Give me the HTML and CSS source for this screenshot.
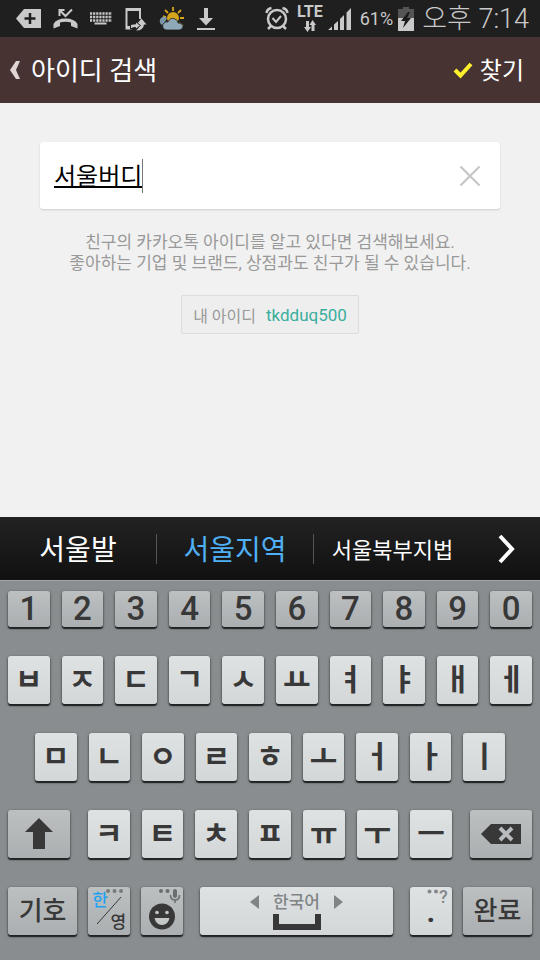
FILE: index.html
```html
<!DOCTYPE html>
<html lang="ko">
<head>
<meta charset="utf-8">
<meta name="viewport" content="width=device-width, initial-scale=1">
<title>아이디 검색</title>
<link rel="stylesheet" href="styles.css">
</head>
<body>
<div class="screen">
  <div class="status">
    <div class="status-icons">
      <svg width="25" height="20" viewBox="0 0 25 20"><path d="M8 0H25V19H8L0 9.500Z" fill="#c9c9c9"/><path d="M14 4V15M8.500 9.500H19.500" stroke="#1f1f1f" stroke-width="2.500"/></svg>
      <svg width="25" height="22" viewBox="0 0 24 22"><path d="M0 20.500V16Q3 10.500 12 10.500Q21 10.500 24 16V20.500L17.500 18V14.500Q12 13 6.500 14.500V18Z" fill="#c9c9c9"/><path d="M6 8V2H11M6 2L12 8L18.500 1.500" fill="none" stroke="#c9c9c9" stroke-width="2"/></svg>
      <svg width="22" height="13" viewBox="0 0 22 13"><path d="M0 1.500H22M0 5H22M0 8.500H22" stroke="#c9c9c9" stroke-width="2.400" stroke-dasharray="2.200 .9"/><path d="M4.500 11.500H16.500" stroke="#c9c9c9" stroke-width="2"/></svg>
      <svg width="23" height="24" viewBox="0 0 22 24"><path d="M1 1H16.500V12H14.500V4H3V19H7V22.500H1Z" fill="#c9c9c9"/><path d="M17 11.500L22 17.500H19.500Q19 23.500 11.500 23.500Q15 21 15 17.500H12Z" fill="#c9c9c9"/><path d="M6 18Q8 16.500 11 17V14.500L16 18.500L11 22.500V20.500Q9 20 6 22Z" fill="#c9c9c9" stroke="#1f1f1f" stroke-width="1"/></svg>
      <svg width="26" height="25" viewBox="0 0 26 25"><path d="M14 1V5M6 4L9 7M22 4L19 7M25 12H21M24 20L20 17M4 10L7 11" stroke="#d6a51c" stroke-width="1.800"/><circle cx="14" cy="12" r="6" fill="#d6a51c"/><path d="M3 19A4.500 4.500 0 0 1 2 12Q5 9 8 12L5 18Z" fill="#7b97a7"/><path d="M7 24A4 4 0 0 1 5 17Q7 15 9 16Q11 11 16 13Q19 14 19 17Q24 17 24 21Q23 24 20 24Z" fill="#90a9b8" stroke="#1f1f1f" stroke-width=".8"/></svg>
      <svg class="download" width="18" height="24" viewBox="0 0 18 24"><path d="M7 1H11V11H16L9 18.500L2 11H7ZM0 21H18V23H0Z" fill="#c9c9c9"/></svg>
    </div>
    <div class="status-info">
      <svg width="24" height="25" viewBox="0 0 24 25"><g fill="none" stroke="#c9c9c9"><circle cx="12" cy="13" r="9" stroke-width="2.500"/><path d="M7.500 12L11 16L16 10" stroke-width="2"/><path d="M1.500 7Q2 3 6.500 2M22.500 7Q22 3 17.500 2" stroke-width="2.500"/><path d="M6 20L3 23M18 20L21 23" stroke-width="2.500"/></g></svg>
      <div class="network"><span>LTE</span><svg width="12" height="12" viewBox="0 0 12 12"><path d="M2 1H5V7H7L3.500 12L0 7H2ZM7.500 11V5H5.500L8.500 0L12 5H10.500V11Z" fill="#c9c9c9"/></svg></div>
      <svg width="24" height="24" viewBox="0 0 24 24"><path d="M0 23L4 19.500V23ZM6 17.500L10 14V23H6ZM12 12L16 8V23H12ZM18.500 5.500L23 1V23H18.500Z" fill="#c9c9c9"/></svg>
      <span class="percent">61%</span>
      <svg width="16" height="24" viewBox="0 0 16 24"><path d="M5 0H11V2H16V11H0V2H5Z" fill="#555"/><path d="M0 11H16V24H0Z" fill="#c9c9c9"/><path d="M10 5L3 14H7L5 21L13 11H9L12 5Z" fill="#1b1b1b"/></svg>
      <span class="clock">오후 7:14</span>
    </div>
  </div>

  <header class="titlebar">
    <button class="back" type="button"><svg width="10" height="20" viewBox="0 0 10 20" aria-hidden="true"><path d="M6 1H10L6 10L10 19H6L0 10Z" fill="#e0d5d3"/></svg><span>아이디 검색</span></button>
    <button class="find" type="submit" form="search"><svg width="20" height="18" viewBox="0 0 20 18" aria-hidden="true"><path d="M2 9L7.500 14.500L18 3" fill="none" stroke="#fff02e" stroke-width="4"/></svg><span>찾기</span></button>
  </header>

  <main class="content">
    <form class="search" id="search">
      <input class="search-input" type="text" aria-label="아이디" value="서울버디"><span class="caret"></span>
      <button class="clear" type="reset" aria-label="지우기"><svg width="22" height="22" viewBox="0 0 22 22"><path d="M1.500 1.500L20.500 20.500M20.500 1.500L1.500 20.500" stroke="#c6c6c6" stroke-width="2.200"/></svg></button>
    </form>
    <p class="hint">친구의 카카오톡 아이디를 알고 있다면 검색해보세요.<br>좋아하는 기업 및 브랜드, 상점과도 친구가 될 수 있습니다.</p>
    <button class="my-id" type="button"><span>내 아이디</span><span class="id">tkdduq500</span></button>
  </main>

  <section class="keyboard">
    <div class="candidates">
      <button type="button">서울발</button>
      <button class="selected" type="button">서울지역</button>
      <button class="long" type="button">서울북부지법</button>
      <button class="more" type="button" aria-label="더 보기"><svg width="18" height="30" viewBox="0 0 18 30"><path d="M3 2L15 15L3 28" fill="none" stroke="#fff" stroke-width="4"/></svg></button>
    </div>
    <div class="keys">
      <div class="row ten numbers">
        <button class="key">1</button><button class="key">2</button><button class="key">3</button><button class="key">4</button><button class="key">5</button><button class="key">6</button><button class="key">7</button><button class="key">8</button><button class="key">9</button><button class="key">0</button>
      </div>
      <div class="row ten">
        <button class="key">ㅂ</button><button class="key">ㅈ</button><button class="key">ㄷ</button><button class="key">ㄱ</button><button class="key">ㅅ</button><button class="key">ㅛ</button><button class="key">ㅕ</button><button class="key">ㅑ</button><button class="key">ㅐ</button><button class="key">ㅔ</button>
      </div>
      <div class="row nine">
        <button class="key">ㅁ</button><button class="key">ㄴ</button><button class="key">ㅇ</button><button class="key">ㄹ</button><button class="key">ㅎ</button><button class="key">ㅗ</button><button class="key">ㅓ</button><button class="key">ㅏ</button><button class="key">ㅣ</button>
      </div>
      <div class="row shift-row">
        <button class="key dark" aria-label="Shift"><svg width="28" height="32" viewBox="0 0 28 32"><path d="M14 0L28 14H20V31H8V14H0Z" fill="#383838"/></svg></button>
        <div class="row seven">
          <button class="key">ㅋ</button><button class="key">ㅌ</button><button class="key">ㅊ</button><button class="key">ㅍ</button><button class="key">ㅠ</button><button class="key">ㅜ</button><button class="key">ㅡ</button>
        </div>
        <button class="key dark" aria-label="삭제"><svg width="40" height="20" viewBox="0 0 40 20"><path d="M10 0H40V20H10L0 10Z" fill="#383838"/><path d="M19 4L31 16M31 4L19 16" stroke="#b9bcbe" stroke-width="4"/></svg></button>
      </div>
      <div class="row bottom-row">
        <div class="row left-group">
          <button class="key dark label">기호</button>
          <button class="key dark language"><span class="ko">한</span><span class="en">영</span><svg class="slash" viewBox="0 0 42 48"><path d="M9 37L33 10" stroke="#383838"/><g fill="#777a7c"><circle cx="20" cy="4" r="2"/><circle cx="26.500" cy="4" r="2"/><circle cx="33" cy="4" r="2"/></g></svg></button>
          <button class="key dark" aria-label="이모티콘"><svg width="42" height="48" viewBox="0 0 42 48"><circle cx="21" cy="29.500" r="13" fill="#383838"/><circle cx="16" cy="25.500" r="1.800" fill="#c5c8c9"/><circle cx="26" cy="25.500" r="1.800" fill="#c5c8c9"/><path d="M13.500 31H28.500Q27 38 21 38Q15 38 13.500 31Z" fill="#c5c8c9"/><g fill="#6b6e70"><circle cx="20" cy="4" r="2"/><circle cx="26.500" cy="4" r="2"/><rect x="32" y="2" width="4" height="9" rx="2"/></g><path d="M29.500 8Q29.500 13 34 13Q38.500 13 38.500 8M34 13V16" fill="none" stroke="#6b6e70" stroke-width="1.500"/></svg></button>
        </div>
        <button class="key space"><span class="space-label"><svg width="9" height="14" viewBox="0 0 9 14"><path d="M9 0V14L0 7Z" fill="#808486"/></svg>한국어<svg width="9" height="14" viewBox="0 0 9 14"><path d="M0 0V14L9 7Z" fill="#808486"/></svg></span><svg width="48" height="16" viewBox="0 0 48 16"><path d="M0 0H6V10H42V0H48V16H0Z" fill="#383838"/></svg></button>
        <div class="row right-group">
          <button class="key period"><span class="alt"><svg width="12" height="5" viewBox="0 0 12 5"><circle cx="2.500" cy="2.500" r="2" fill="#85888a"/><circle cx="9" cy="2.500" r="2" fill="#85888a"/></svg>?</span><span class="dot">.</span></button>
          <button class="key dark label">완료</button>
        </div>
      </div>
    </div>
  </section>
</div>
</body>
</html>
```
FILE: styles.css
```css
* { box-sizing: border-box; }
body {
  margin: 0;
  background: #f1f1f1;
  font-family: Roboto, "Noto Sans CJK KR", sans-serif;
}
button {
  margin: 0;
  padding: 0;
  border: 0;
  background: none;
  color: inherit;
  font: inherit;
}
svg { display: block; flex: none; }
.screen {
  display: flex;
  flex-direction: column;
  min-height: 100vh;
}

.status {
  display: flex;
  align-items: center;
  justify-content: space-between;
  height: 37px;
  padding: 0 11px 0 16px;
  background: #1f1f1f;
  color: #c9c9c9;
}
.status-icons { display: flex; align-items: center; gap: 12px; }
.status-info { display: flex; align-items: center; gap: 5px; }
.network {
  display: flex;
  flex-direction: column;
  align-items: center;
  gap: 2px;
  margin-left: 3px;
  font-size: 16px;
  line-height: 13px;
  font-weight: 700;
}
.percent { margin-left: 3px; font-size: 18px; font-weight: 400; }
.clock {
  margin-left: 3px;
  font-size: 27px;
  line-height: 36px;
  font-weight: 300;
  white-space: nowrap;
}

.titlebar {
  display: flex;
  align-items: center;
  justify-content: space-between;
  height: 66px;
  padding: 0 16px 0 10px;
  background: #463332;
  color: #fff;
}
.back, .find { display: flex; align-items: center; }
.back { gap: 11px; font-size: 26px; }
.find { gap: 7px; font-size: 24px; }
.back span, .find span { padding-bottom: 4px; }

.content {
  flex: 1;
  display: flex;
  flex-direction: column;
  align-items: center;
  padding: 39px 40px;
}
.search {
  display: flex;
  align-items: center;
  width: 100%;
  height: 67px;
  padding: 0 19px 0 14px;
  border-radius: 3px;
  background: #fff;
  box-shadow: 0 1px 2px #ccc;
}
.search-input {
  field-sizing: content;
  padding: 2px 0 0;
  border: 0;
  outline: 0;
  background: none;
  color: #000;
  font: 24px/36px Roboto, "Noto Sans CJK KR", sans-serif;
  text-decoration: underline;
  text-decoration-thickness: 2px;
}
.caret { width: 1px; height: 34px; background: #777; }
.clear { margin-left: auto; }
.hint {
  margin: 23px 0 21px;
  color: #999;
  font-size: 17px;
  line-height: 21px;
  text-align: center;
  white-space: nowrap;
}
.my-id {
  display: flex;
  align-items: center;
  gap: 10px;
  height: 39px;
  padding: 0 11px;
  border: 1px solid #ddd;
  border-radius: 2px;
  background: #eee;
  color: #999;
  font-size: 16px;
}
.id { color: #3aae9d; font-size: 17px; }

.keyboard { background: #898d8f; }
.candidates {
  display: grid;
  grid-template-columns: 157fr 157fr 157fr 69fr;
  align-items: center;
  height: 63px;
  background: linear-gradient(#222, #111);
  color: #fff;
  font-size: 28px;
}
.candidates button {
  height: 30px;
  padding-top: 2px;
  line-height: 30px;
  white-space: nowrap;
}
.candidates button:nth-child(-n+2) { border-right: 1px solid #555; }
.candidates .selected { color: #4fb0f5; }
.candidates .long { font-size: 22px; }
.candidates .more { display: flex; justify-content: center; padding: 0; }

.keys {
  display: flex;
  flex-direction: column;
  gap: 29px;
  padding: 10px 8px 25px;
  border-top: 1px solid #a4a7a9;
}
.row { display: grid; gap: 12px; }
.ten { grid-template-columns: repeat(10, minmax(0, 1fr)); }
.nine {
  grid-template-columns: repeat(9, minmax(0, 1fr));
  padding: 0 27px;
}
.seven { grid-template-columns: repeat(7, minmax(0, 1fr)); }
.shift-row { grid-template-columns: 62fr 364fr 62fr; gap: 18px; }
.bottom-row { grid-template-columns: 175fr 192fr 122fr; gap: 17px; }
.left-group { grid-template-columns: 69fr 42fr 42fr; gap: 11px; }
.right-group { grid-template-columns: 42fr 69fr; gap: 11px; }
.key {
  display: flex;
  align-items: center;
  justify-content: center;
  min-width: 0;
  height: 48px;
  border-radius: 3px;
  background: linear-gradient(#dfe2e3, #d4d7d8);
  box-shadow: 0 2px 1px #202224, 0 1px 3px #444;
  color: #383838;
  font-size: 30px;
  font-weight: 700;
  line-height: 48px;
}
.numbers .key {
  height: 36px;
  font-size: 33px;
  font-weight: 500;
  line-height: 36px;
}
.numbers .key, .dark { background: linear-gradient(#bdc0c1, #acafb1); }
.key.label { font-size: 26px; font-weight: 500; }
.key.language { position: relative; font-size: 17px; line-height: 20px; font-weight: 500; }
.ko { position: absolute; left: 4px; top: 3px; color: #1da1f2; }
.en { position: absolute; right: 4px; bottom: 3px; }
.slash { position: absolute; inset: 0; width: 100%; height: 100%; }
.space { flex-direction: column; gap: 2px; }
.space-label {
  display: flex;
  align-items: center;
  gap: 14px;
  color: #808486;
  font-size: 17px;
  font-weight: 500;
  line-height: 20px;
}
.period { position: relative; }
.alt {
  position: absolute;
  top: 2px;
  right: 4px;
  display: flex;
  color: #85888a;
  font-size: 18px;
  font-weight: 500;
  line-height: 16px;
}
.dot { padding-top: 2px; line-height: 36px; }
```
